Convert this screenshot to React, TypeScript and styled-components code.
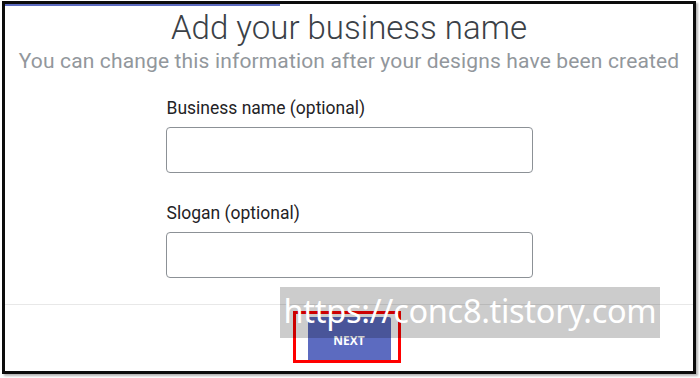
import React from "react";
import styled, { createGlobalStyle } from "styled-components";

const GlobalStyle = createGlobalStyle`
  html, body {
    margin: 0;
    padding: 0;
    background: #ffffff;
  }
  body {
    width: 700px;
    height: 378px;
    overflow: hidden;
    font-family: Roboto, "Noto Sans", "Liberation Sans", sans-serif;
  }
`;

const App = () => {
  return (
    <>
      <GlobalStyle />
      <Page>
        <Frame>
          <Progress>
            <ProgressFill style={{ width: "40%" }} />
          </Progress>
          <Content>
            <Title>Add your business name</Title>
            <Subtitle>
              You can change this information after your designs have been created
            </Subtitle>
            <Form>
              <Field>
                <Label>Business name (optional)</Label>
                <Input type="text" />
              </Field>
              <Field>
                <Label>Slogan (optional)</Label>
                <Input type="text" />
              </Field>
            </Form>
          </Content>
          <Footer>
            <NextButton>NEXT</NextButton>
          </Footer>
        </Frame>
        <Highlight />
        <Watermark>https://conc8.tistory.com</Watermark>
      </Page>
    </>
  );
};

const Page = styled.div`
  position: relative;
  width: 700px;
  height: 378px;
  padding: 1px 0 0 2px;
  box-sizing: border-box;
`;

const Frame = styled.div`
  width: 694px;
  height: 373px;
  box-sizing: border-box;
  border: 3px solid #0c0c0c;
  box-shadow: 2px 2px 2px #b5b5b5;
  background: #ffffff;
  display: flex;
  flex-direction: column;
  overflow: hidden;
`;

const Progress = styled.div`
  height: 2px;
  width: 100%;
  background: #ffffff;
`;

const ProgressFill = styled.div`
  height: 100%;
  background: #5c6bc0;
`;

const Content = styled.div`
  display: flex;
  flex-direction: column;
  align-items: center;
  flex: 1;
`;

const Title = styled.h1`
  margin: 2px 0 0;
  font-family: Roboto, "Liberation Sans", sans-serif;
  font-weight: 300;
  font-size: 33px;
  line-height: 40px;
  color: #3b4147;
`;

const Subtitle = styled.p`
  margin: 1px 0 0;
  font-family: Roboto, "Liberation Sans", sans-serif;
  font-weight: 400;
  font-size: 21px;
  line-height: 24px;
  letter-spacing: 0.15px;
  color: #92979c;
  white-space: nowrap;
`;

const Form = styled.div`
  width: 367px;
  display: flex;
  flex-direction: column;
  gap: 30px;
  margin-top: 25px;
`;

const Field = styled.div`
  display: flex;
  flex-direction: column;
  gap: 9px;
`;

const Label = styled.label`
  font-family: Roboto, "Liberation Sans", sans-serif;
  font-size: 17.5px;
  line-height: 20px;
  color: #1f2326;
  padding-left: 1px;
`;

const Input = styled.input`
  width: 100%;
  height: 46px;
  box-sizing: border-box;
  border: 1px solid #8c9196;
  border-radius: 4px;
  background: #ffffff;
  font-size: 16px;
  padding: 0 12px;
  outline: none;
`;

const Footer = styled.div`
  border-top: 1px solid #e8e8e8;
  height: 67px;
  display: flex;
  justify-content: center;
  padding-top: 12px;
  box-sizing: border-box;
`;

const NextButton = styled.button`
  width: 83px;
  height: 45px;
  border: none;
  border-radius: 2px;
  background: #5c6bc0;
  color: #ffffff;
  font-family: "Open Sans", "Liberation Sans", sans-serif;
  font-weight: 700;
  font-size: 12px;
  padding-top: 2px;
`;

const Highlight = styled.div`
  position: absolute;
  left: 293px;
  top: 311px;
  width: 108px;
  height: 52px;
  box-sizing: border-box;
  border: 3px solid #ff0000;
`;

const Watermark = styled.div`
  position: absolute;
  left: 280px;
  top: 287px;
  width: 380px;
  height: 51px;
  background: rgba(0, 0, 0, 0.2);
  color: #ffffff;
  font-family: "Noto Sans", "Open Sans", sans-serif;
  font-size: 32.5px;
  line-height: 48px;
  text-align: center;
  white-space: nowrap;
  letter-spacing: -0.3px;
`;

export default App;
